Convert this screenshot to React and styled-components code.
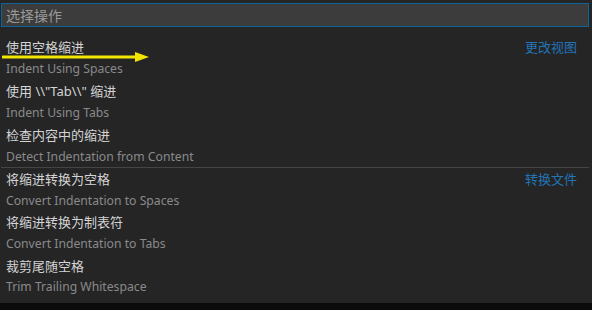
import React from "react";
import styled, { createGlobalStyle } from "styled-components";

const GlobalStyle = createGlobalStyle`
  html, body {
    margin: 0;
    padding: 0;
    background: #0b0b0b;
  }
`;

const Screen = styled.div`
  width: 592px;
  height: 310px;
  background: #0b0b0b;
  font-family: "Noto Sans", "Noto Sans CJK SC", sans-serif;
  overflow: hidden;
`;

const Panel = styled.div`
  position: relative;
  height: 303px;
  background: #252526;
  padding: 3px 3px 0 1px;
  box-sizing: border-box;
`;

const Input = styled.div`
  height: 24px;
  box-sizing: border-box;
  background: #3c3c3c;
  border: 1px solid #0e639c;
  padding-left: 4px;
  display: flex;
  align-items: center;
  color: #9a9a9a;
  font-size: 14px;
  font-family: "Noto Sans CJK SC", sans-serif;
`;

const List = styled.div`
  margin-top: 8px;
`;

const Group = styled.div`
  border-top: ${(p) => (p.$separated ? "1px solid #454545" : "none")};
`;

const Item = styled.div`
  padding: 0 12px 0 5px;
`;

const LabelRow = styled.div`
  display: flex;
  justify-content: space-between;
  align-items: center;
  height: ${(p) => p.$h}px;
`;

const Label = styled.span`
  color: #d4d4d4;
  font-size: 13px;
  font-family: "Noto Sans", "Noto Sans CJK SC", sans-serif;
`;

const GroupTitle = styled.span`
  color: #2274b5;
  font-size: 13px;
  font-family: "Noto Sans CJK SC", sans-serif;
`;

const Detail = styled.div`
  height: ${(p) => p.$h}px;
  display: flex;
  align-items: center;
  color: #8a8a8a;
  font-size: 12.2px;
`;

const Arrow = styled.svg`
  position: absolute;
  left: 2px;
  top: 50px;
`;

const groups = [
  {
    title: "更改视图",
    h: 22,
    items: [
      ["使用空格缩进", "Indent Using Spaces"],
      ['使用 \\\\"Tab\\\\" 缩进', "Indent Using Tabs"],
      ["检查内容中的缩进", "Detect Indentation from Content"],
    ],
  },
  {
    title: "转换文件",
    h: 21.6,
    items: [
      ["将缩进转换为空格", "Convert Indentation to Spaces"],
      ["将缩进转换为制表符", "Convert Indentation to Tabs"],
      ["裁剪尾随空格", "Trim Trailing Whitespace"],
    ],
  },
];

export default function App() {
  return (
    <Screen>
      <GlobalStyle />
      <Panel>
        <Input>选择操作</Input>
        <List>
          {groups.map((g, gi) => (
            <Group key={g.title} $separated={gi > 0}>
              {g.items.map(([label, detail], i) => (
                <Item key={detail}>
                  <LabelRow $h={g.h}>
                    <Label>{label}</Label>
                    {i === 0 && <GroupTitle>{g.title}</GroupTitle>}
                  </LabelRow>
                  <Detail $h={g.h}>{detail}</Detail>
                </Item>
              ))}
            </Group>
          ))}
        </List>
        <Arrow width="150" height="14" viewBox="0 0 150 14">
          <line x1="1" y1="7" x2="136" y2="7" stroke="#f2e600" strokeWidth="3" strokeLinecap="round" />
          <polygon points="133,2 147,7 133,12" fill="#f2e600" />
        </Arrow>
      </Panel>
    </Screen>
  );
}
